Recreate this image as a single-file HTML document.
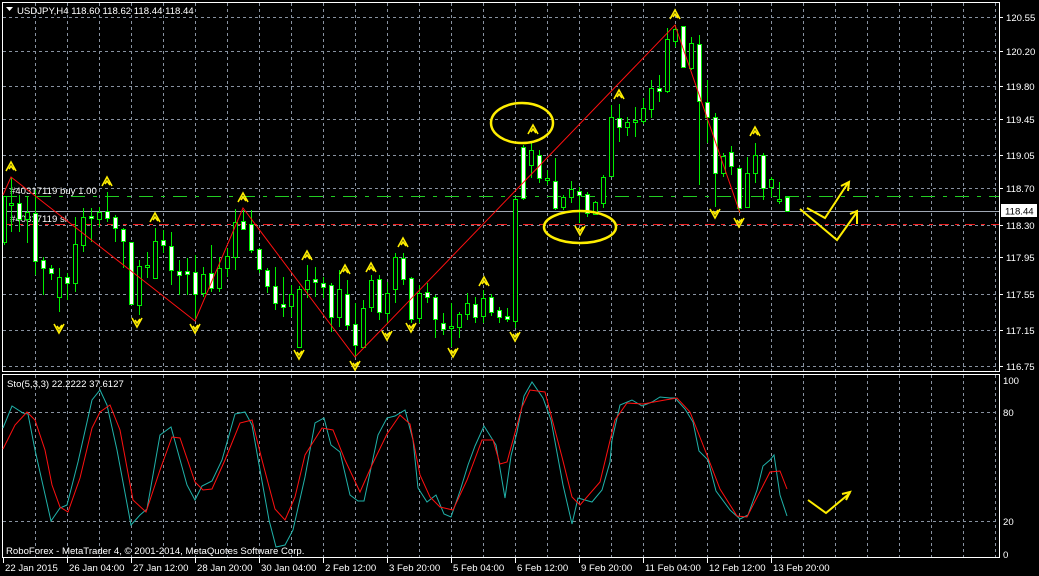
<!DOCTYPE html>
<html><head><meta charset="utf-8"><style>
html,body{margin:0;padding:0;background:#000;}
svg{display:block;}
text{font-family:"Liberation Sans",sans-serif;font-size:9.6px;fill:#fff;}
</style></head><body>
<svg id="s" width="1039" height="576" viewBox="0 0 1039 576" xmlns="http://www.w3.org/2000/svg">
<rect width="1039" height="576" fill="#000"/>
<g id="grid" stroke="#8892a0" stroke-width="1" stroke-dasharray="3,3"></g>
<rect x="2.5" y="2.5" width="997" height="369" fill="none" stroke="#fff"/>
<rect x="2.5" y="374.5" width="997" height="183" fill="none" stroke="#fff"/>
<line x1="3" y1="196.5" x2="999" y2="196.5" stroke="#22cc22" stroke-dasharray="14,8,4,8"/>
<line x1="3" y1="211.5" x2="999" y2="211.5" stroke="#a0a8b4"/>
<line x1="3" y1="224.5" x2="999" y2="224.5" stroke="#ee2020" stroke-dasharray="10,6,4,6" stroke-width="1"/>
<text x="10" y="194">#40317119 buy 1.00</text>
<text x="10" y="222">#40317119 sl</text>
<g id="candles"></g>
<polyline points="3,195 11,177 195,321 243,208 355,357 545,160 675,25 740,213" fill="none" stroke="#ff1010" stroke-width="1"/>
<g id="arrows" stroke="#ffee00" stroke-width="1.6" fill="none" stroke-linejoin="miter"></g>
<ellipse cx="522" cy="123" rx="31" ry="20" fill="none" stroke="#ffee00" stroke-width="2.5"/>
<ellipse cx="580" cy="227" rx="36" ry="16" fill="none" stroke="#ffee00" stroke-width="2.5"/>
<g stroke="#ffee00" stroke-width="2" fill="none">
<polyline points="807,208 825,218 848,183"/><polyline points="841,186 849,182 848,191"/>
<polyline points="800,209 837,240 857,212"/><polyline points="850,214 857,211 857,224"/>
<polyline points="808,500 826,513 850,493"/><polyline points="842,494 850,492 846,500"/>
</g>
<polyline fill="none" stroke="#20b2aa" stroke-width="1" points="3,428 12,406 23,413 28,414 35,450 51,521 60,508 67,505 78,462 92,400 100,390 107,405 117,450 131,525 140,515 147,509 160,435 171,427 187,485 195,500 202,486 212,481 222,460 235,414 245,412 252,425 260,470 269,520 276,547 285,545 293,530 305,477 315,423 324,418 331,445 340,452 350,495 358,501 364,501 378,435 387,418 395,416 405,410 413,440 418,488 427,502 436,495 444,514 451,517 460,491 468,465 475,446 484,426 496,445 505,498 511,456 517,432 524,396 532,382 543,398 551,420 563,485 572,524 578,498 592,502 602,490 610,462 612,440 620,405 632,400 642,406 652,402 660,397 670,398 675,398 685,409 693,422 699,451 708,460 716,491 730,510 740,519 748,515 757,490 763,466 770,460 774,455 780,495 787,516"/>
<polyline fill="none" stroke="#ff1010" stroke-width="1" points="3,449 15,425 27,412 35,420 45,450 52,485 60,507 68,512 80,478 92,428 100,412 110,405 120,430 133,500 146,512 160,470 172,437 180,438 195,482 203,490 212,489 225,460 240,423 252,420 262,460 275,509 285,520 295,497 305,455 322,428 333,430 345,460 360,492 372,465 387,434 400,415 410,424 420,475 430,497 440,507 453,510 467,480 482,440 493,440 500,464 507,462 522,407 530,390 545,392 562,457 572,497 580,505 600,482 615,420 627,403 643,404 665,400 677,398 690,412 705,450 720,489 737,516 747,517 770,472 780,471 787,489"/>
<polygon points="6,7 13,7 9.5,11" fill="#fff"/>
<text x="17" y="14">USDJPY,H4  118.60 118.62 118.44 118.44</text>
<text x="7" y="387">Sto(5,3,3) 22.2222 37.6127</text>
<text x="6" y="554">RoboForex - MetaTrader 4, © 2001-2014, MetaQuotes Software Corp.</text>
<g id="axis"></g>
<rect x="1001" y="204" width="36" height="13" fill="#fff"/>
<text x="1005" y="214.5" style="fill:#000">118.44</text>
</svg>
<script>
var NS="http://www.w3.org/2000/svg";
function el(p,t,a,txt){var e=document.createElementNS(NS,t);for(var k in a)e.setAttribute(k,a[k]);if(txt)e.textContent=txt;p.appendChild(e);return e;}
var g=document.getElementById('grid');
[17,51,86,119,155,188,225,257,294,330,366].forEach(function(y){el(g,'line',{x1:3,y1:y+.5,x2:999,y2:y+.5});});
[412,521].forEach(function(y){el(g,'line',{x1:3,y1:y+.5,x2:999,y2:y+.5});});
for(var x=35;x<999;x+=32){el(g,'line',{x1:x+.5,y1:3,x2:x+.5,y2:371});el(g,'line',{x1:x+.5,y1:375,x2:x+.5,y2:557});}
var ax=document.getElementById('axis');
var pl=[[17,'120.55'],[51,'120.20'],[86,'119.80'],[119,'119.45'],[155,'119.05'],[188,'118.70'],[225,'118.30'],[257,'117.95'],[294,'117.55'],[330,'117.15'],[366,'116.75']];
pl.forEach(function(p){el(ax,'line',{x1:999,y1:p[0]+.5,x2:1003,y2:p[0]+.5,stroke:'#fff'});el(ax,'text',{x:1006,y:p[0]+4},p[1]);});
[[380,'100'],[412,'80'],[521,'20'],[554,'0']].forEach(function(p){el(ax,'text',{x:1003,y:p[0]+4},p[1]);});
var dl=[[3,'22 Jan 2015'],[67,'26 Jan 04:00'],[131,'27 Jan 12:00'],[195,'28 Jan 20:00'],[259,'30 Jan 04:00'],[323,'2 Feb 12:00'],[387,'3 Feb 20:00'],[451,'5 Feb 04:00'],[515,'6 Feb 12:00'],[579,'9 Feb 20:00'],[643,'11 Feb 04:00'],[707,'12 Feb 12:00'],[771,'13 Feb 20:00']];
dl.forEach(function(d){el(ax,'line',{x1:d[0]+.5,y1:558,x2:d[0]+.5,y2:563,stroke:'#fff'});el(ax,'text',{x:d[0]+2,y:571},d[1]);});
var C=[[203,205,178,232,0],[203,219,195,232,1],[212,219,197,243,0],[213,261,190,275,1],[260,268,257,295,1],[268,273,265,280,1],[277,297,268,312,0],[277,283,273,300,1],[244,283,217,292,0],[217,245,208,252,0],[216,218,208,242,1],[212,219,207,227,0],[211,218,192,222,1],[217,228,215,242,1],[229,241,228,268,1],[242,304,242,305,1],[266,305,260,315,0],[265,267,252,278,0],[241,278,228,278,0],[240,245,230,253,1],[246,270,232,285,1],[271,275,260,295,1],[271,274,258,295,1],[272,294,255,320,1],[274,293,267,297,0],[273,288,245,292,1],[268,288,257,292,0],[256,268,248,277,0],[222,257,209,270,0],[221,229,210,230,1],[224,250,210,253,1],[249,269,248,273,1],[270,286,268,293,1],[286,303,267,310,1],[304,307,277,317,1],[294,306,285,317,0],[289,347,286,348,0],[280,289,265,298,0],[279,282,267,297,1],[283,287,277,298,1],[285,317,283,332,1],[289,317,270,327,0],[294,325,280,330,1],[324,345,303,357,1],[308,347,300,348,0],[280,307,275,312,0],[279,312,275,320,1],[293,313,282,323,0],[257,289,253,303,0],[258,279,253,285,1],[278,319,277,323,1],[293,318,285,323,0],[292,297,283,303,1],[297,319,295,338,1],[323,329,313,335,1],[326,328,303,347,0],[314,327,312,338,0],[303,314,293,320,0],[304,317,297,323,1],[298,316,290,323,0],[297,312,294,316,1],[310,317,307,323,1],[316,319,308,322,1],[199,321,198,328,0],[147,198,145,200,1],[150,165,143,178,0],[155,178,150,183,1],[178,180,170,185,0],[181,208,158,210,1],[197,207,195,210,0],[189,197,181,203,0],[191,195,187,223,1],[194,213,192,217,1],[202,214,201,215,0],[177,203,175,208,0],[117,176,105,177,0],[118,127,104,142,1],[122,127,117,136,0],[120,122,107,137,0],[108,121,98,124,0],[88,109,80,118,0],[88,91,75,102,1],[39,91,28,93,0],[29,41,25,47,0],[26,67,26,68,1],[43,68,37,70,0],[44,101,35,185,1],[102,117,80,143,1],[117,173,113,207,1],[156,173,153,177,0],[152,166,146,175,1],[168,208,167,213,1],[173,207,157,208,0],[155,173,143,183,0],[155,188,153,200,1],[179,187,177,197,0],[199,201,182,204,0],[197,211,196,212,1]];
var cg=document.getElementById('candles');
el(cg,'line',{x1:4.5,y1:196,x2:4.5,y2:245,stroke:'#00ee00'});
el(cg,'rect',{x:3.5,y:196.5,width:3,height:46,fill:'#000',stroke:'#00ee00'});
C.forEach(function(c,i){var x=11+8*i;
el(cg,'line',{x1:x+.5,y1:c[2],x2:x+.5,y2:c[3],stroke:'#00ee00'});
var h=Math.max(c[1]-c[0],2);
el(cg,'rect',{x:x-1.5,y:c[0]+.5,width:4,height:h,fill:c[4]?'#fff':'#000',stroke:'#00ee00'});});
var ag=document.getElementById('arrows');
function up(x,y){el(ag,'path',{d:'M'+(x-5)+','+(y+4)+' L'+x+','+(y-5)+' L'+(x+5)+','+(y+4)+' M'+(x-2)+','+(y+2)+' L'+x+','+(y-1)+' L'+(x+3)+','+(y+3)});}
function dn(x,y){el(ag,'path',{d:'M'+(x-5)+','+(y-4)+' L'+x+','+(y+5)+' L'+(x+5)+','+(y-4)+' M'+(x-2)+','+(y-2)+' L'+x+','+(y+1)+' L'+(x+3)+','+(y-3)});}
[[11,167],[107,182],[155,218],[243,198],[307,256],[345,270],[371,268],[403,243],[484,282],[533,130],[619,95],[675,15],[755,132]].forEach(function(p){up(p[0],p[1]);});
[[59,328],[137,322],[195,328],[299,354],[355,365],[387,335],[411,327],[453,352],[515,336],[580,230],[715,213],[739,222]].forEach(function(p){dn(p[0],p[1]);});
</script>
</body></html>
